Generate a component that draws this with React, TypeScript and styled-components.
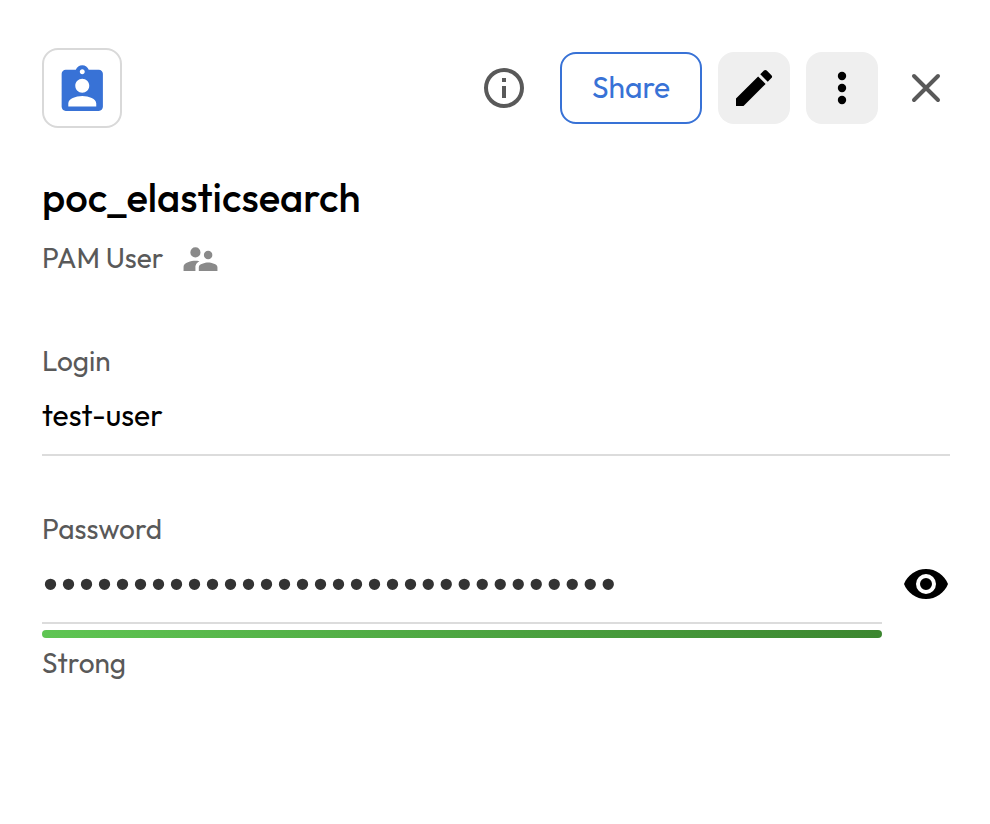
import React from "react";
import styled, { createGlobalStyle } from "styled-components";

const GlobalStyle = createGlobalStyle`
  *, *::before, *::after { box-sizing: border-box; }
  body { margin: 0; background: #fff; }
  button { font: inherit; cursor: pointer; }
`;

const Panel = styled.main`
  display: flex;
  flex-direction: column;
  width: 990px;
  height: 824px;
  padding: 48px 40px 0 42px;
  background: #fff;
  color: #000;
  font-family: Outfit, Lato, sans-serif;
`;

const Toolbar = styled.header`
  display: flex;
  align-items: center;
  justify-content: space-between;
  height: 80px;
`;

const RecordBadge = styled.div`
  display: flex;
  align-items: center;
  justify-content: center;
  width: 80px;
  height: 80px;
  border: 2px solid #d9d9d9;
  border-radius: 16px;
  color: #3872d6;
`;

const Actions = styled.div`
  display: flex;
  align-items: center;
`;

const IconButton = styled.button<{ $filled?: boolean; $width?: number; $color?: string; $after?: number }>`
  display: flex;
  align-items: center;
  justify-content: center;
  width: ${(p) => p.$width ?? 72}px;
  height: ${(p) => (p.$filled ? 72 : 48)}px;
  margin-right: ${(p) => p.$after ?? 0}px;
  padding: 0;
  border: 0;
  border-radius: 16px;
  background: ${(p) => (p.$filled ? "#efefef" : "transparent")};
  color: ${(p) => p.$color ?? "#000"};
`;

const ShareButton = styled.button`
  width: 142px;
  height: 72px;
  margin-right: 16px;
  padding: 0 0 2px;
  border: 2px solid #3872d6;
  border-radius: 16px;
  background: #fff;
  color: #3872d6;
  && { font-size: 30px; }
`;

const Text = styled.div<{ $size: number; $line: number; $weight?: number; $muted?: boolean }>`
  margin: 0;
  font-size: ${(p) => p.$size}px;
  line-height: ${(p) => p.$line}px;
  font-weight: ${(p) => p.$weight ?? 400};
  color: ${(p) => (p.$muted ? "#595959" : "#000")};
  white-space: nowrap;
`;

const Heading = styled.section`
  display: flex;
  flex-direction: column;
  margin-top: 44px;
`;

const TypeRow = styled.div`
  display: flex;
  align-items: center;
  gap: 16px;
  height: 40px;
  margin-top: 16px;
  color: #8a8a8a;
`;

const Field = styled.section<{ $top: number }>`
  display: flex;
  flex-direction: column;
  margin-top: ${(p) => p.$top}px;
`;

const Value = styled.div`
  height: 75px;
  padding-top: 14px;
  border-bottom: 2px solid #dcdcdc;
`;

const PasswordRow = styled.div`
  display: flex;
  align-items: flex-start;
`;

const SecretValue = styled(Value)`
  width: 840px;
  padding-top: 17px;
`;

const Bullets = styled.div`
  margin-left: -3px;
  font-family: "DejaVu Sans", sans-serif;
  font-size: 39px;
  line-height: 40px;
  letter-spacing: -5.01px;
  color: #333;
  white-space: nowrap;
  will-change: transform;
`;

const RevealButton = styled(IconButton)`
  margin: 11px 0 0 20px;
`;

const Strength = styled.div`
  width: 840px;
  height: 8px;
  margin: 6px 0 5px;
  border-radius: 4px;
  background: linear-gradient(90deg, #5fc553, #3c8630);
`;

const Icon = ({
  size = 48,
  viewBox = "0 0 24 24",
  children,
}: {
  size?: number;
  viewBox?: string;
  children: React.ReactNode;
}) => (
  <svg width={size} height={size} viewBox={viewBox} fill="currentColor" aria-hidden="true">
    {children}
  </svg>
);

const SECRET_LENGTH = 32;

export default function App() {
  return (
    <>
      <GlobalStyle />
      <Panel>
        <Toolbar>
          <RecordBadge>
            <Icon size={55} viewBox="0.1 -1.8 24 24">
              <path d="M19.2 2h-4.38C14.4.84 13.3 0 12 0S9.6.84 9.18 2H4.8c-1 0-1.8.8-1.8 1.8v14.4c0 1 .8 1.8 1.8 1.8h14.4c1 0 1.8-.8 1.8-1.8V3.8c0-1-.8-1.8-1.8-1.8zm-7.2-.15c.6 0 1.08.48 1.08 1.08S12.6 4 12 4s-1.08-.47-1.08-1.07S11.4 1.85 12 1.85zM12 5.9c1.66 0 3.05 1.38 3.05 3.05S13.66 12 12 12s-3.05-1.38-3.05-3.05S10.34 5.9 12 5.9zM18.1 18H5.9v-1.3c0-2 3.2-3.25 6.1-3.25s6.1 1.25 6.1 3.25z" />
            </Icon>
          </RecordBadge>
          <Actions>
            <IconButton aria-label="Info" $width={48} $color="#595959" $after={32}>
              <Icon>
                <path d="M11 7h2v2h-2zm0 4h2v6h-2zm1-9a10 10 0 1 0 0 20 10 10 0 0 0 0-20zm0 18a8 8 0 1 1 0-16 8 8 0 0 1 0 16z" />
              </Icon>
            </IconButton>
            <ShareButton>Share</ShareButton>
            <IconButton aria-label="Edit" $filled $after={16}>
              <Icon>
                <path d="M3 17.25V21h3.75L17.81 9.94l-3.75-3.75L3 17.25zM20.71 7.04a1 1 0 0 0 0-1.41l-2.34-2.34a1 1 0 0 0-1.41 0l-1.83 1.83 3.75 3.75 1.83-1.83z" />
              </Icon>
            </IconButton>
            <IconButton aria-label="More" $filled $after={24}>
              <Icon>
                <circle cx="12" cy="6" r="2.1" />
                <circle cx="12" cy="12" r="2.1" />
                <circle cx="12" cy="18" r="2.1" />
              </Icon>
            </IconButton>
            <IconButton aria-label="Close" $width={48} $color="#595959">
              <Icon>
                <path d="M6 6l12 12M18 6L6 18" fill="none" stroke="currentColor" strokeWidth="2" strokeLinecap="round" />
              </Icon>
            </IconButton>
          </Actions>
        </Toolbar>

        <Heading>
          <Text as="h1" $size={40} $line={50} $weight={500}>poc_elasticsearch</Text>
          <TypeRow>
            <Text $size={28} $line={40} $muted>PAM User</Text>
            <Icon size={41} viewBox="-0.1 -0.5 24.2 24.2">
              <path d="M16.5 12a2.5 2.5 0 1 0 0-5 2.5 2.5 0 0 0 0 5zM9 11a3 3 0 1 0 0-6 3 3 0 0 0 0 6zm7.5 3c-1.83 0-5.5.92-5.5 2.75V19h11v-2.25c0-1.83-3.67-2.75-5.5-2.75zM9 13c-2.33 0-7 1.17-7 3.5V19h7v-2.25c0-.85.33-2.34 2.37-3.47C10.5 13.1 9.66 13 9 13z" />
            </Icon>
          </TypeRow>
        </Heading>

        <Field $top={63}>
          <Text $size={28} $line={40} $muted>Login</Text>
          <Value>
            <Text $size={30} $line={40}>test-user</Text>
          </Value>
        </Field>

        <Field $top={53}>
          <Text $size={28} $line={40} $muted>Password</Text>
          <PasswordRow>
            <SecretValue>
              <Bullets>{"•".repeat(SECRET_LENGTH)}</Bullets>
            </SecretValue>
            <RevealButton aria-label="Show password" $width={48}>
              <Icon>
                <path d="M12 4.5C7 4.5 2.73 7.61 1 12c1.73 4.39 6 7.5 11 7.5s9.27-3.11 11-7.5c-1.73-4.39-6-7.5-11-7.5zM12 17a5 5 0 1 1 0-10 5 5 0 0 1 0 10zm0-8a3 3 0 1 0 0 6 3 3 0 0 0 0-6z" />
              </Icon>
            </RevealButton>
          </PasswordRow>
          <Strength />
          <Text $size={28} $line={40} $muted>Strong</Text>
        </Field>
      </Panel>
    </>
  );
}
